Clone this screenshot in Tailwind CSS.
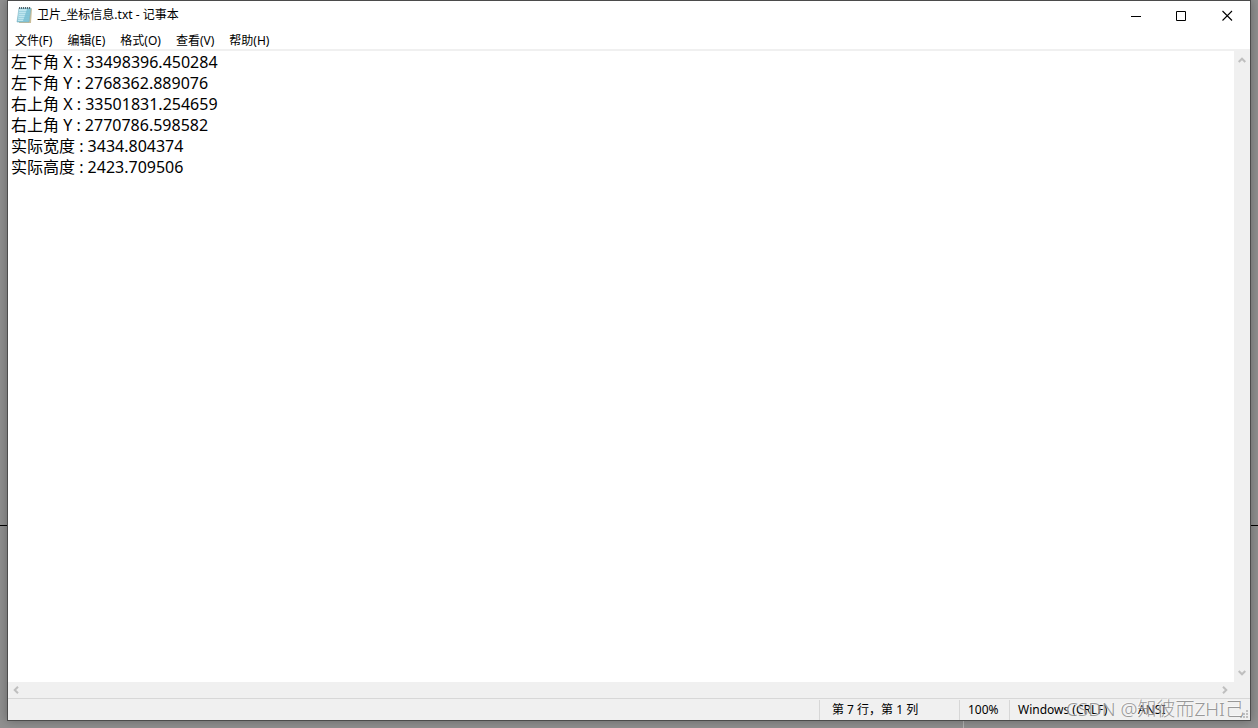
<!DOCTYPE html>
<html lang="zh-CN">
  <head>
    <meta charset="UTF-8" />
    <meta name="viewport" content="width=device-width, initial-scale=1.0" />
    <title>卫片_坐标信息.txt - 记事本</title>
    <script src="https://cdn.jsdelivr.net/npm/@tailwindcss/browser@4"></script>
  </head>
  <body class="relative h-screen overflow-hidden bg-[#909090] px-[7px] pb-[7px] font-['Noto_Sans','Noto_Sans_CJK_SC',sans-serif] text-xs text-black">
    <!-- desktop lines behind the window -->
    <div class="absolute inset-x-0 top-[525px] h-px bg-black"></div>
    <div class="absolute bottom-0 left-[963px] h-[7px] w-px bg-[#b4b4b4]"></div>

    <div class="relative flex h-full flex-col border border-[#4b4b4b] bg-white shadow-[0_0_10px_rgba(0,0,0,0.3)]">
      <header class="flex h-7 shrink-0 items-center">
        <svg class="ml-2 h-[18px] w-[17px]" viewBox="0 0 17 18">
          <path d="M3 2.5h13l-1 14.5H3z" fill="#c9bd98" />
          <path d="M3 2h12l-2 14H1z" fill="#83c6d8" stroke="#7fb2c0" stroke-width=".6" />
          <path d="M3 3h8L7 15H2z" fill="#bfe6ef" />
          <path d="M3 5.5h11M3 7.500h10.500M3 9.500h10M2.500 11.500h10M2 13.500h10" stroke="#7fc0d2" stroke-width=".5" />
          <path d="M3.500 1v2M5.500 1v2M7.500 1v2M9.500 1v2M11.500 1v2M13.500 1v2" stroke="#55646a" />
        </svg>
        <h1 class="ml-1 flex-1">卫片_坐标信息.txt - 记事本</h1>
        <button class="flex h-full w-[46px] items-center justify-center" aria-label="最小化">
          <svg class="size-[11px]" viewBox="0 0 11 11"><path d="M1 6.500h10" stroke="#000" /></svg>
        </button>
        <button class="flex h-full w-[46px] items-center justify-center" aria-label="最大化">
          <svg class="size-[11px]" viewBox="0 0 11 11"><path d="M.5 1.500h9v9h-9z" fill="none" stroke="#000" /></svg>
        </button>
        <button class="flex h-full w-[46px] items-center justify-center" aria-label="关闭">
          <svg class="size-[11px]" viewBox="0 0 11 11"><path d="M.5 1l9.500 9.500M10 1L.5 10.500" stroke="#000" stroke-width="1.100" /></svg>
        </button>
      </header>

      <nav class="flex h-[22px] shrink-0 items-end gap-[15px] border-b-2 border-[#f0f0f0] pl-[7px]">
        <button>文件(F)</button>
        <button>编辑(E)</button>
        <button>格式(O)</button>
        <button>查看(V)</button>
        <button>帮助(H)</button>
      </nav>

      <main class="flex min-h-0 flex-1">
        <textarea class="flex-1 resize-none overflow-hidden pt-px pl-[3px] text-base leading-[21px] whitespace-pre outline-none" aria-label="文本内容" spellcheck="false">左下角 X : 33498396.450284
左下角 Y : 2768362.889076
右上角 X : 33501831.254659
右上角 Y : 2770786.598582
实际宽度 : 3434.804374
实际高度 : 2423.709506
</textarea>
        <div class="flex w-4 shrink-0 flex-col justify-between bg-[#f0f0f0]">
          <button class="flex h-[18px] items-center justify-center" aria-label="向上滚动">
            <svg class="h-[6px] w-2" viewBox="0 0 8 6"><path d="M.7 5L4 1.700L7.300 5" fill="none" stroke="#bfbfbf" stroke-width="2" /></svg>
          </button>
          <button class="flex h-[18px] items-center justify-center" aria-label="向下滚动">
            <svg class="h-[6px] w-2" viewBox="0 0 8 6"><path d="M.7 1L4 4.300L7.300 1" fill="none" stroke="#bfbfbf" stroke-width="2" /></svg>
          </button>
        </div>
      </main>

      <div class="flex h-4 shrink-0 justify-between bg-[#f0f0f0] pr-4">
        <button class="flex w-4 items-center justify-center" aria-label="向左滚动">
          <svg class="h-2 w-[6px]" viewBox="0 0 6 8"><path d="M5 .7L1.700 4L5 7.300" fill="none" stroke="#bfbfbf" stroke-width="2" /></svg>
        </button>
        <button class="flex w-[18px] items-center justify-center" aria-label="向右滚动">
          <svg class="h-2 w-[6px]" viewBox="0 0 6 8"><path d="M1 .7L4.300 4L1 7.300" fill="none" stroke="#bfbfbf" stroke-width="2" /></svg>
        </button>
      </div>

      <footer class="flex h-[22px] shrink-0 items-center justify-end border-t border-[#d7d7d7] bg-[#f0f0f0] leading-5">
        <div class="w-[140px] border-l border-[#d7d7d7] pl-3">第 7 行，第 1 列</div>
        <div class="w-[50px] border-l border-[#d7d7d7] pl-2">100%</div>
        <div class="w-[120px] border-l border-[#d7d7d7] pl-2">Windows (CRLF)</div>
        <div class="w-[121px] pl-[9px]">ANSI</div>
      </footer>

      <!-- resize grip -->
      <svg class="absolute right-[2px] bottom-[2px] size-2" viewBox="0 0 8 8">
        <path d="M6 0h2v2H6zM3 3h2v2H3zM6 3h2v2H6zM0 6h2v2H0zM3 6h2v2H3zM6 6h2v2H6z" fill="#bfbfbf" />
      </svg>
      <div class="absolute right-[6px] bottom-0 text-[19px] leading-[22px] font-light whitespace-nowrap text-[#8c8c8c]/90 [text-shadow:-1px_-1px_0_rgba(255,255,255,0.5)]">CSDN @知彼而ZHI己</div>
    </div>
  </body>
</html>
